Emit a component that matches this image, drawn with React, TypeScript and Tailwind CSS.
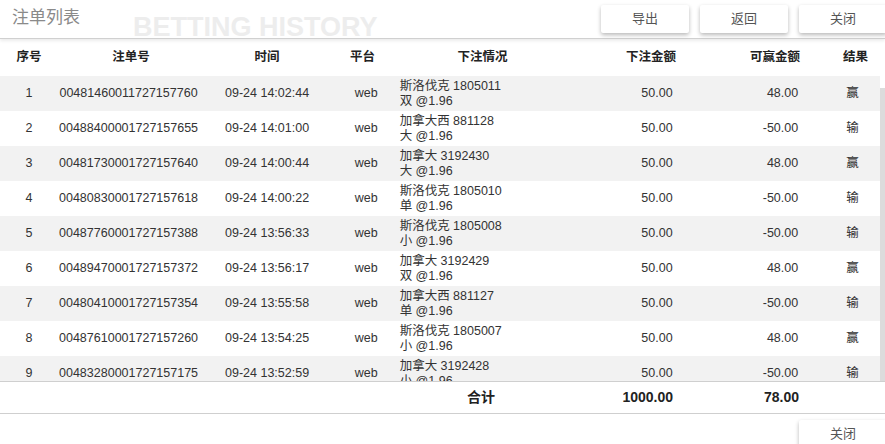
import React from "react";

type Bet = {
  no: number;
  id: string;
  time: string;
  game: string;
  pick: string;
  amount: string;
  win: string;
  result: string;
};

const bets: Bet[] = [
  { no: 1, id: "00481460011727157760", time: "09-24 14:02:44", game: "斯洛伐克 1805011", pick: "双 @1.96", amount: "50.00", win: "48.00", result: "赢" },
  { no: 2, id: "00488400001727157655", time: "09-24 14:01:00", game: "加拿大西 881128", pick: "大 @1.96", amount: "50.00", win: "-50.00", result: "输" },
  { no: 3, id: "00481730001727157640", time: "09-24 14:00:44", game: "加拿大 3192430", pick: "大 @1.96", amount: "50.00", win: "48.00", result: "赢" },
  { no: 4, id: "00480830001727157618", time: "09-24 14:00:22", game: "斯洛伐克 1805010", pick: "单 @1.96", amount: "50.00", win: "-50.00", result: "输" },
  { no: 5, id: "00487760001727157388", time: "09-24 13:56:33", game: "斯洛伐克 1805008", pick: "小 @1.96", amount: "50.00", win: "-50.00", result: "输" },
  { no: 6, id: "00489470001727157372", time: "09-24 13:56:17", game: "加拿大 3192429", pick: "双 @1.96", amount: "50.00", win: "48.00", result: "赢" },
  { no: 7, id: "00480410001727157354", time: "09-24 13:55:58", game: "加拿大西 881127", pick: "单 @1.96", amount: "50.00", win: "-50.00", result: "输" },
  { no: 8, id: "00487610001727157260", time: "09-24 13:54:25", game: "斯洛伐克 1805007", pick: "小 @1.96", amount: "50.00", win: "48.00", result: "赢" },
  { no: 9, id: "00483280001727157175", time: "09-24 13:52:59", game: "加拿大 3192428", pick: "小 @1.96", amount: "50.00", win: "-50.00", result: "输" },
];

const font = "font-['Liberation_Sans','Noto_Sans_CJK_SC',sans-serif]";

function Button({ label }: { label: string }) {
  return (
    <button className="w-[88px] h-[28px] shrink-0 bg-white rounded-[2px] shadow-[0_2px_4px_rgba(0,0,0,0.28)] text-[13px] text-[#555]">
      {label}
    </button>
  );
}

export default function App() {
  return (
    <div className={`w-[885px] h-[444px] overflow-hidden bg-white ${font} text-[#333]`}>
      {/* Title bar */}
      <div className="relative h-[39px] flex items-start border-b border-[#d0d0d0] shadow-[0_2px_3px_rgba(0,0,0,0.08)]">
        <h1 className="pl-[12px] pt-[7px] text-[17px] text-[#8a8a8a] leading-[22px]">注单列表</h1>
        <span className="absolute left-[133px] top-[12px] text-[27px] leading-[30px] font-bold text-[#ededed] font-['Liberation_Sans',sans-serif]">
          BETTING HISTORY
        </span>
        <div className="ml-auto mr-[-2px] mt-[5px] flex gap-[11px]">
          <Button label="导出" />
          <Button label="返回" />
          <Button label="关闭" />
        </div>
      </div>

      {/* Header */}
      <div className="h-[37px] flex items-center text-[12.5px] font-bold text-[#222]">
        <div className="w-[58px] text-center">序号</div>
        <div className="w-[146px] text-center">注单号</div>
        <div className="w-[126px] text-center">时间</div>
        <div className="w-[65px] text-center">平台</div>
        <div className="w-[175px] text-center">下注情况</div>
        <div className="w-[106px] text-right">下注金额</div>
        <div className="w-[152px] text-right pr-[28px]">可赢金额</div>
        <div className="w-[55px] text-center">结果</div>
      </div>

      {/* Body */}
      <div className="h-[305px] flex overflow-hidden">
        <div className="w-[880px] shrink-0">
          {bets.map((b, i) => (
            <div
              key={b.no}
              className={`h-[35px] flex items-center text-[12.5px] ${i % 2 === 0 ? "bg-[#f2f2f2]" : "bg-white"}`}
            >
              <div className="w-[58px] text-center">{b.no}</div>
              <div className="w-[146px] pr-[4px] text-center">{b.id}</div>
              <div className="w-[126px] pl-[2px] text-center">{b.time}</div>
              <div className="w-[65px] pl-[10px] text-center">web</div>
              <div className="w-[175px] pl-[6px] leading-[15px]">
                <div>{b.game}</div>
                <div>{b.pick}</div>
              </div>
              <div className="w-[106px] pr-[1px] text-right">{b.amount}</div>
              <div className="w-[152px] text-right pr-[27px]">{b.win}</div>
              <div className="w-[55px] text-center">{b.result}</div>
            </div>
          ))}
        </div>
        <div className="w-[5px] mt-[12px] bg-[#dcdcdc]" />
      </div>

      {/* Totals */}
      <div className="h-[33px] flex items-center border-t border-b border-[#cfcfcf] text-[14px] font-bold text-[#222]">
        <div className="w-[395px]" />
        <div className="w-[172px] text-center">合计</div>
        <div className="w-[106px] text-right">1000.00</div>
        <div className="w-[154px] text-right pr-[28px]">78.00</div>
      </div>

      {/* Footer */}
      <div className="flex justify-end pt-[6px] mr-[-2px]">
        <Button label="关闭" />
      </div>
    </div>
  );
}
